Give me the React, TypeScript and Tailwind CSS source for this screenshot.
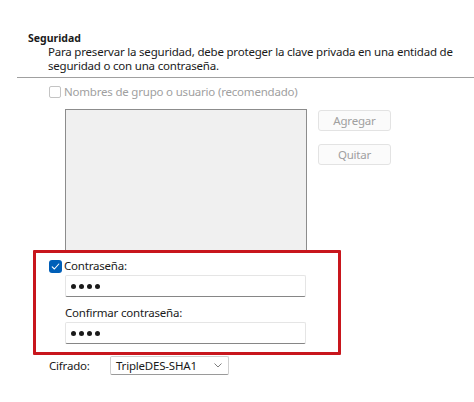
import React from "react";

function Dots() {
  return (
    <div className="flex items-center gap-[3px] pl-[5px]">
      {[0, 1, 2, 3].map((i) => (
        <span key={i} className="block w-[5px] h-[5px] rounded-full bg-[#1a1a1a]" />
      ))}
    </div>
  );
}

export default function App() {
  return (
    <div
      className="w-[474px] h-[402px] bg-white text-[#1a1a1a] overflow-hidden flex flex-col whitespace-nowrap tracking-[-0.2px]"
      style={{ fontFamily: '"Noto Sans", "Open Sans", sans-serif' }}
    >
      <div className="pt-[31px] pl-[28px] text-[10.5px] font-bold leading-[14px] tracking-normal">Seguridad</div>
      <div className="pl-[48px] text-[11.5px] leading-[14px]">
        <div>Para preservar la seguridad, debe proteger la clave privada en una entidad de</div>
        <div>seguridad o con una contraseña.</div>
      </div>
      <div className="ml-[17px] mt-[4px] border-t border-[#a0a0a0]" />
      <div className="ml-[49px] mt-[7px] flex items-center h-[14px]">
        <span className="block w-[12px] h-[12px] border border-[#c4c4c4] rounded-[2px] bg-white" />
        <span className="ml-[3px] text-[11.5px] leading-[14px] text-[#a0a0a0]">
          Nombres de grupo o usuario (recomendado)
        </span>
      </div>
      <div className="ml-[65px] mt-[10px] flex items-start">
        <div className="w-[242px] h-[141px] bg-[#f0f0f0] border border-[#8c8c8c] border-b-0" />
        <div className="ml-[11px] mt-[1px] flex flex-col gap-[13px]">
          <div className="w-[73px] h-[21px] border border-[#e3e3e3] rounded-[3px] bg-[#fbfbfb] flex items-center justify-center text-[11.5px] text-[#a0a0a0]">
            Agregar
          </div>
          <div className="w-[73px] h-[21px] border border-[#e3e3e3] rounded-[3px] bg-[#fbfbfb] flex items-center justify-center text-[11.5px] text-[#a0a0a0]">
            Quitar
          </div>
        </div>
      </div>
      <div className="ml-[33px] w-[308px] h-[105px] border-[3px] border-[#c8161d] rounded-[1px] flex flex-col">
        <div className="ml-[13px] mt-[6px] flex items-center h-[14px]">
          <span className="flex items-center justify-center w-[13px] h-[13px] rounded-[3px] bg-[#005fb8]">
            <svg width="9" height="9" viewBox="0 0 9 9" fill="none">
              <path d="M1.2 4.8 L3.4 7 L7.8 2" stroke="white" strokeWidth="1.1" strokeLinecap="round" strokeLinejoin="round" />
            </svg>
          </span>
          <span className="ml-[2px] text-[11.5px] leading-[14px]">Contraseña:</span>
        </div>
        <div className="ml-[29px] mt-[2px] w-[241px] h-[22px] border border-[#e5e5e5] border-b-[#868686] rounded-[2px] bg-white flex items-center">
          <Dots />
        </div>
        <div className="ml-[29px] mt-[9px] text-[11.5px] leading-[14px]">Confirmar contraseña:</div>
        <div className="ml-[29px] mt-[2px] w-[241px] h-[22px] border border-[#e5e5e5] border-b-[#868686] rounded-[2px] bg-white flex items-center">
          <Dots />
        </div>
      </div>
      <div className="ml-[49px] mt-[1px] flex items-center">
        <span className="text-[11.5px] leading-[14px] w-[61px]">Cifrado:</span>
        <div className="w-[119px] h-[19px] border border-[#cfcfcf] border-b-[#9a9a9a] rounded-[2px] bg-white flex items-center justify-between pl-[5px] pr-[6px]">
          <span className="text-[11.5px] leading-[14px]">TripleDES-SHA1</span>
          <svg width="8" height="5" viewBox="0 0 8 5" fill="none">
            <path d="M0.5 0.5 L4 4 L7.5 0.5" stroke="#707070" strokeWidth="0.9" />
          </svg>
        </div>
      </div>
    </div>
  );
}
